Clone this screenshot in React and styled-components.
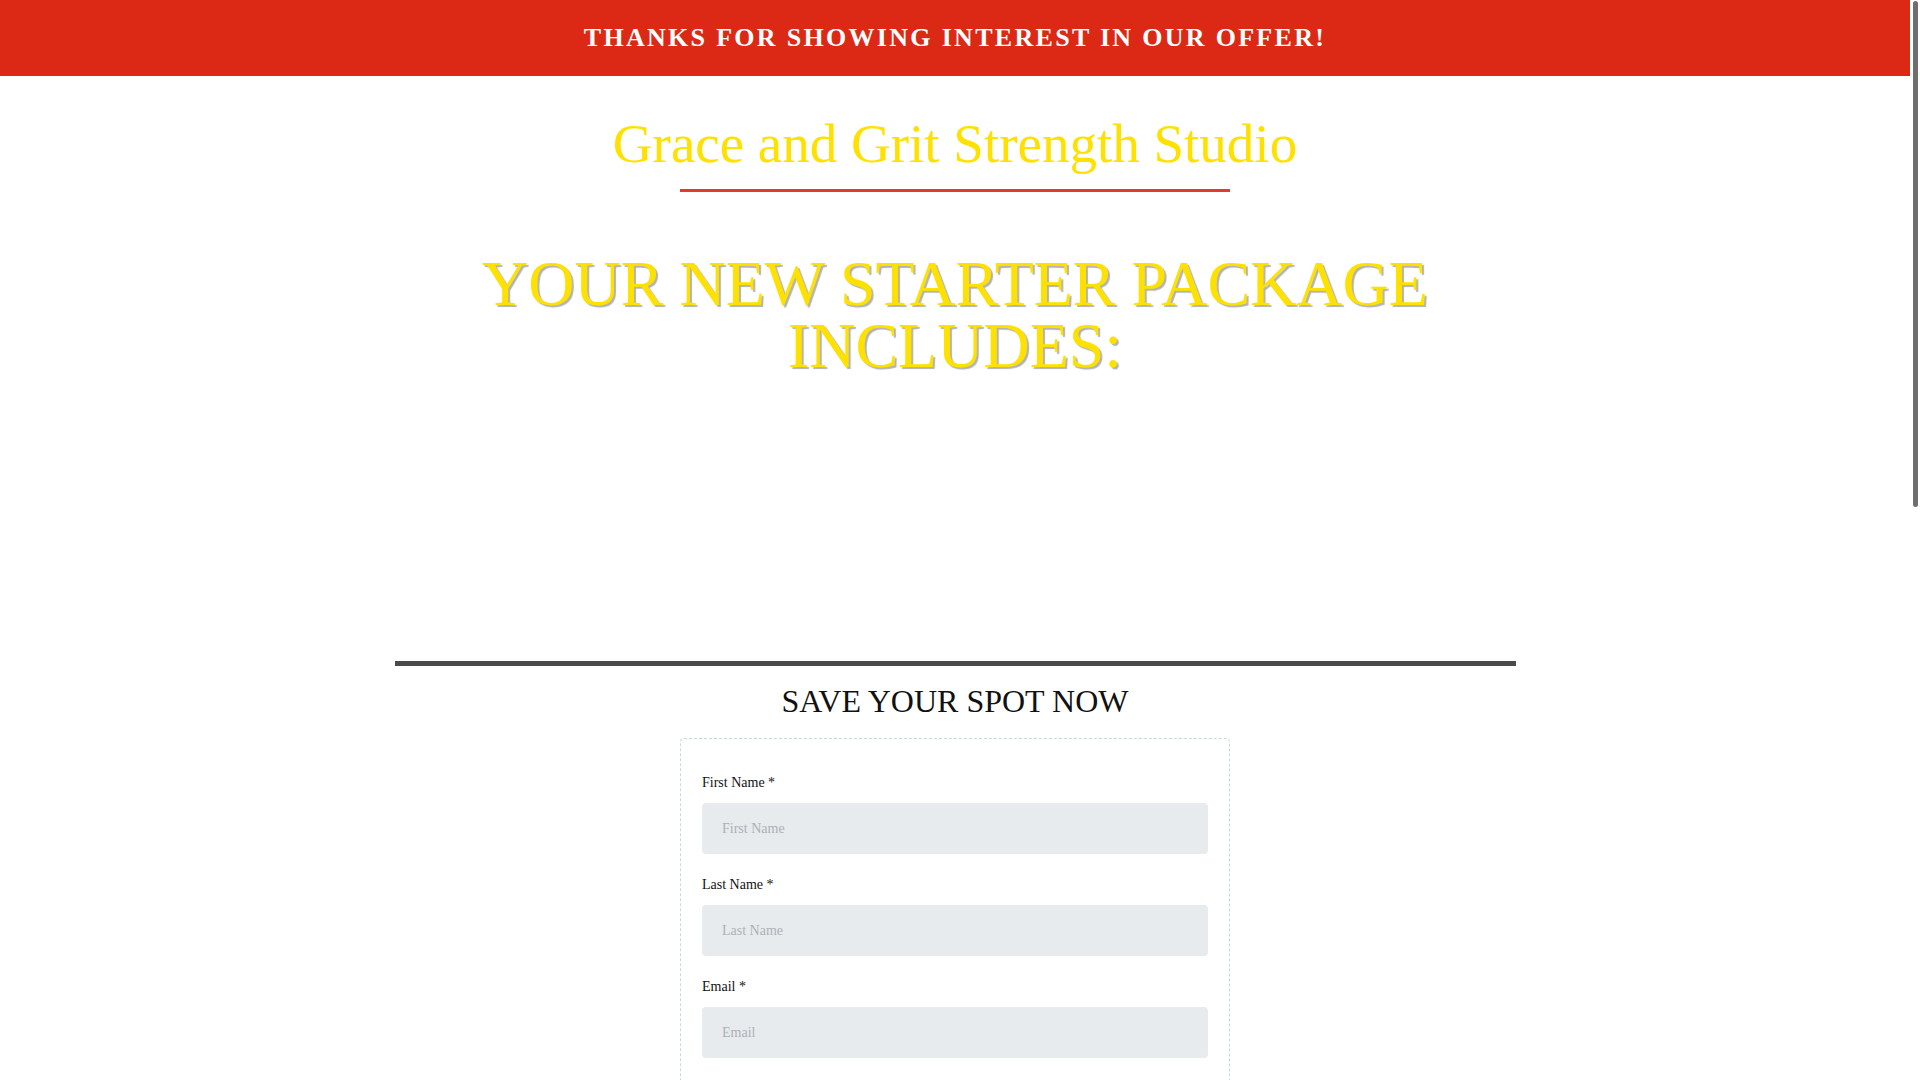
import React from "react";
import styled, { createGlobalStyle } from "styled-components";

const GlobalStyle = createGlobalStyle`
  html, body {
    margin: 0;
    padding: 0;
    background: #ffffff;
    overflow: hidden;
  }
  body {
    font-family: "Liberation Serif", "Times New Roman", serif;
    color: #111111;
  }
  * { box-sizing: border-box; }
`;

const Shell = styled.div`
  display: flex;
  height: 100vh;
`;

const Viewport = styled.div`
  flex: 1;
  min-width: 0;
  height: 100vh;
  overflow-y: auto;
  scrollbar-width: none;
  &::-webkit-scrollbar {
    display: none;
  }
`;

const ScrollRail = styled.div`
  width: 10px;
  flex: none;
  background: #ffffff;
  display: flex;
  justify-content: center;
  padding-top: 1px;
`;

const ScrollThumb = styled.div`
  width: 5px;
  height: 506px;
  border-radius: 3px;
  background: #6e6e6e;
`;

const Page = styled.div`
  display: flex;
  flex-direction: column;
  min-height: 2296px;
`;

const TopBar = styled.header`
  height: 76px;
  background: #dc2916;
  display: flex;
  align-items: center;
  justify-content: center;
`;

const TopBarText = styled.h3`
  margin: 0;
  color: #ffffff;
  font-size: 26px;
  font-weight: 700;
  letter-spacing: 2.3px;
  line-height: 30px;
`;

const Main = styled.main`
  display: flex;
  flex-direction: column;
  align-items: center;
  padding-top: 37px;
  padding-bottom: 120px;
`;

const StudioTitle = styled.h1`
  margin: 0;
  font-size: 55px;
  line-height: 61px;
  font-weight: 400;
  color: #ffe100;
  text-align: center;
`;

const TitleRule = styled.div`
  width: 550px;
  height: 3px;
  margin-top: 15px;
  background: #e13b2b;
`;

const PackageHeading = styled.h2`
  margin: 61px 0 0;
  max-width: 1121px;
  font-size: 64px;
  line-height: 62px;
  font-weight: 400;
  color: #ffe100;
  text-align: center;
  text-shadow: 2px 2px 1px rgba(0, 0, 0, 0.3);
`;

const MediaSlot = styled.div`
  width: 1121px;
  height: 284px;
`;

const Divider = styled.div`
  width: 1121px;
  height: 5px;
  background: #4a4a4a;
`;

const FormHeading = styled.h2`
  margin: 18px 0 0;
  font-size: 32px;
  font-weight: 400;
  line-height: 35px;
  color: #111111;
  text-align: center;
`;

const FormCard = styled.form`
  margin-top: 19px;
  width: 550px;
  border: 1px dashed #c6dae6;
  border-radius: 4px;
  padding: 34px 21px 36px;
  display: flex;
  flex-direction: column;
`;

const Field = styled.div`
  display: flex;
  flex-direction: column;
  margin-bottom: 21px;
`;

const Label = styled.label`
  font-size: 14px;
  line-height: 20px;
  color: #111111;
  margin-bottom: 10px;
`;

const Input = styled.input`
  height: 51px;
  width: 100%;
  border: none;
  outline: none;
  border-radius: 4px;
  background: #e8ebee;
  padding: 0 20px;
  font-family: "Liberation Serif", "Times New Roman", serif;
  font-size: 14px;
  color: #333333;
  &::placeholder {
    color: #abb1b6;
  }
`;

const SubmitButton = styled.button`
  margin-top: 12px;
  height: 54px;
  border: none;
  border-radius: 4px;
  background: #dc2916;
  color: #ffffff;
  font-family: "Liberation Serif", "Times New Roman", serif;
  font-size: 20px;
  font-weight: 700;
  letter-spacing: 1px;
  cursor: pointer;
`;

const fields = [
  { id: "first", label: "First Name *", placeholder: "First Name", type: "text" },
  { id: "last", label: "Last Name *", placeholder: "Last Name", type: "text" },
  { id: "email", label: "Email *", placeholder: "Email", type: "email" },
  { id: "phone", label: "Phone *", placeholder: "Phone", type: "tel" },
];

export default function App() {
  return (
    <>
      <GlobalStyle />
      <Shell>
        <Viewport>
          <Page>
            <TopBar>
              <TopBarText>THANKS FOR SHOWING INTEREST IN OUR OFFER!</TopBarText>
            </TopBar>
            <Main>
              <StudioTitle>Grace and Grit Strength Studio</StudioTitle>
              <TitleRule />
              <PackageHeading>YOUR NEW STARTER PACKAGE INCLUDES:</PackageHeading>
              <MediaSlot />
              <Divider />
              <FormHeading>SAVE YOUR SPOT NOW</FormHeading>
              <FormCard onSubmit={(e) => e.preventDefault()}>
                {fields.map((f) => (
                  <Field key={f.id}>
                    <Label htmlFor={f.id}>{f.label}</Label>
                    <Input id={f.id} type={f.type} placeholder={f.placeholder} />
                  </Field>
                ))}
                <SubmitButton type="submit">SUBMIT</SubmitButton>
              </FormCard>
            </Main>
          </Page>
        </Viewport>
        <ScrollRail aria-hidden="true">
          <ScrollThumb />
        </ScrollRail>
      </Shell>
    </>
  );
}
